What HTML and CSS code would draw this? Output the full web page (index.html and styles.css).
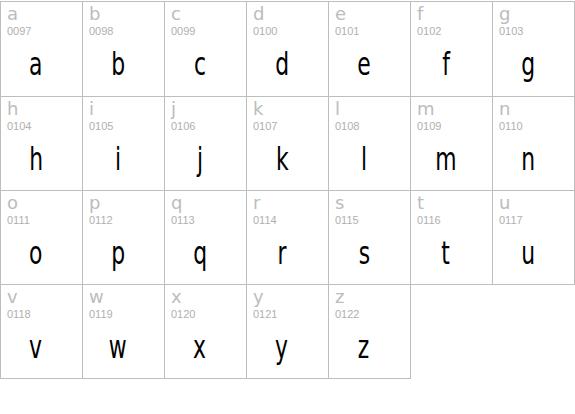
FILE: index.html
```html
<!DOCTYPE html>
<html>
<head>
<meta charset="utf-8">
<link rel="stylesheet" href="styles.css">
</head>
<body>
<div class="grid">
  <div class="cell"><div class="lbl">a</div><div class="code">0097</div><div class="glyph"><span>a</span></div></div>
  <div class="cell"><div class="lbl">b</div><div class="code">0098</div><div class="glyph"><span>b</span></div></div>
  <div class="cell"><div class="lbl">c</div><div class="code">0099</div><div class="glyph"><span>c</span></div></div>
  <div class="cell"><div class="lbl">d</div><div class="code">0100</div><div class="glyph"><span>d</span></div></div>
  <div class="cell"><div class="lbl">e</div><div class="code">0101</div><div class="glyph"><span>e</span></div></div>
  <div class="cell"><div class="lbl">f</div><div class="code">0102</div><div class="glyph"><span>f</span></div></div>
  <div class="cell"><div class="lbl">g</div><div class="code">0103</div><div class="glyph"><span>g</span></div></div>
  <div class="cell"><div class="lbl">h</div><div class="code">0104</div><div class="glyph"><span>h</span></div></div>
  <div class="cell"><div class="lbl">i</div><div class="code">0105</div><div class="glyph"><span>i</span></div></div>
  <div class="cell"><div class="lbl">j</div><div class="code">0106</div><div class="glyph"><span>j</span></div></div>
  <div class="cell"><div class="lbl">k</div><div class="code">0107</div><div class="glyph"><span>k</span></div></div>
  <div class="cell"><div class="lbl">l</div><div class="code">0108</div><div class="glyph"><span>l</span></div></div>
  <div class="cell"><div class="lbl">m</div><div class="code">0109</div><div class="glyph"><span>m</span></div></div>
  <div class="cell"><div class="lbl">n</div><div class="code">0110</div><div class="glyph"><span>n</span></div></div>
  <div class="cell"><div class="lbl">o</div><div class="code">0111</div><div class="glyph"><span>o</span></div></div>
  <div class="cell"><div class="lbl">p</div><div class="code">0112</div><div class="glyph"><span>p</span></div></div>
  <div class="cell"><div class="lbl">q</div><div class="code">0113</div><div class="glyph"><span>q</span></div></div>
  <div class="cell"><div class="lbl">r</div><div class="code">0114</div><div class="glyph"><span>r</span></div></div>
  <div class="cell"><div class="lbl">s</div><div class="code">0115</div><div class="glyph"><span>s</span></div></div>
  <div class="cell"><div class="lbl">t</div><div class="code">0116</div><div class="glyph"><span>t</span></div></div>
  <div class="cell"><div class="lbl">u</div><div class="code">0117</div><div class="glyph"><span>u</span></div></div>
  <div class="cell"><div class="lbl">v</div><div class="code">0118</div><div class="glyph"><span>v</span></div></div>
  <div class="cell"><div class="lbl">w</div><div class="code">0119</div><div class="glyph"><span>w</span></div></div>
  <div class="cell"><div class="lbl">x</div><div class="code">0120</div><div class="glyph"><span>x</span></div></div>
  <div class="cell"><div class="lbl">y</div><div class="code">0121</div><div class="glyph"><span>y</span></div></div>
  <div class="cell"><div class="lbl">z</div><div class="code">0122</div><div class="glyph"><span>z</span></div></div>
</div>
</body>
</html>
```
FILE: styles.css
```css
html, body {
  margin: 0;
  padding: 0;
  background: #fff;
}
.grid {
  margin-top: 1px;
  display: grid;
  grid-template-columns: repeat(7, 82px);
  grid-template-rows: 95px 94px 94px 94px;
  width: 575px;
  box-sizing: border-box;
  border-top: 1px solid #bdbdbd;
  border-left: 1px solid #bdbdbd;
}
.cell {
  box-sizing: border-box;
  border-right: 1px solid #bdbdbd;
  border-bottom: 1px solid #bdbdbd;
  padding-left: 6px;
}
.lbl {
  font-family: "DejaVu Sans", sans-serif;
  font-size: 18px;
  line-height: 20px;
  height: 20px;
  padding-top: 2px;
  color: #bcbcbc;
}
.code {
  font-family: "Liberation Sans", Arial, sans-serif;
  font-size: 11px;
  line-height: 12px;
  height: 12px;
  padding-top: 1px;
  color: #b0b0b0;
}
.glyph {
  font-family: "DejaVu Sans Condensed", "DejaVu Sans", sans-serif;
  font-size: 32px;
  line-height: 40px;
  margin-top: 7px;
  text-align: center;
  padding-right: 17px;
  color: #000;
}
.glyph span {
  display: inline-block;
  transform: scaleX(0.76);
}
```
